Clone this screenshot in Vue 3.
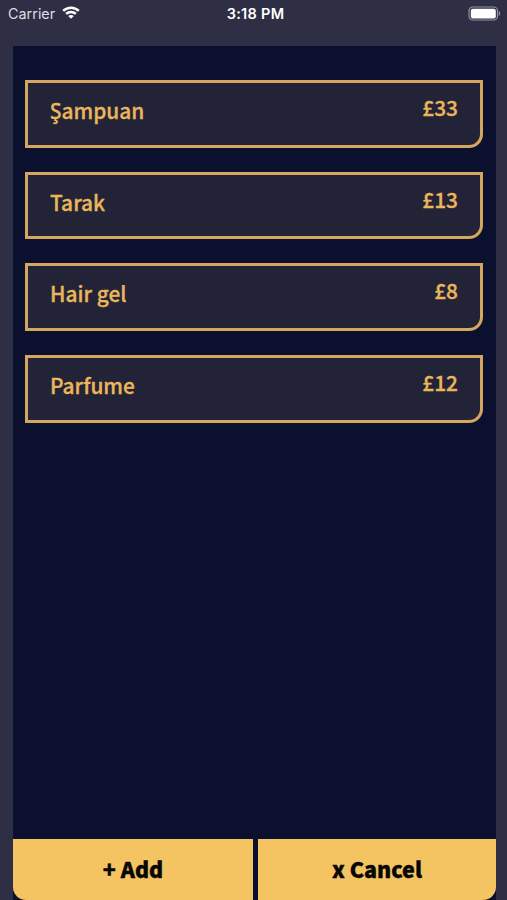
<script setup>
const items = [
  { name: 'Şampuan', price: '£33' },
  { name: 'Tarak', price: '£13' },
  { name: 'Hair gel', price: '£8' },
  { name: 'Parfume', price: '£12' },
]
</script>

<template>
  <div class="screen">
    <header class="status">
      <div class="carrier">
        <span>Carrier</span>
        <svg class="wifi" viewBox="0 0 18 13" width="18" height="13">
          <g fill="none" stroke="#fff" stroke-width="2.5">
            <path d="M1.2 4.9C5.6.6 12.4.6 16.8 4.9" />
            <path d="M4.1 7.9c2.8-2.6 7-2.6 9.8 0" />
          </g>
          <path d="M9 12.8 6.2 10c1.5-1.5 4.1-1.5 5.6 0Z" fill="#fff" />
        </svg>
      </div>
      <span class="time">3:18 PM</span>
      <svg class="battery" viewBox="0 0 33 15" width="33" height="15">
        <rect x="1" y="1" width="28.5" height="13" rx="3.8" fill="none" stroke="#9293a4" stroke-width="1.2" />
        <rect x="2.8" y="2.8" width="25" height="9.6" rx="2" fill="#fff" />
        <path d="M30.8 5.2c1.8.7 1.8 4 0 4.7Z" fill="#9293a4" />
      </svg>
    </header>
    <main class="panel">
      <ul class="list">
        <li v-for="item in items" :key="item.name" class="card">
          <span class="name">{{ item.name }}</span>
          <span class="price">{{ item.price }}</span>
        </li>
      </ul>
      <div class="actions">
        <button class="action add">+ Add</button>
        <button class="action cancel">x Cancel</button>
      </div>
    </main>
  </div>
</template>

<style>
body {
  background: #2e2f45;
}
</style>

<style scoped>
.screen {
  display: flex;
  flex-direction: column;
  box-sizing: border-box;
  width: 507px;
  height: 900px;
  padding: 0 11px 0 13px;
  background: #2e2f45;
  font-family: "Noto Sans CJK SC", "Noto Sans", sans-serif;
}
.status {
  display: grid;
  grid-template-columns: 1fr auto 1fr;
  height: 46px;
  margin: 0 -5px;
  padding-top: 5px;
  box-sizing: border-box;
  color: #fff;
  font-family: Inter, sans-serif;
  font-size: 14.4px;
  line-height: 18px;
}
.carrier {
  display: flex;
  align-items: flex-start;
  gap: 7px;
  color: #dcdce4;
}
.wifi {
  margin-top: 1px;
}
.time {
  padding-left: 2px;
  font-size: 14.5px;
  font-weight: 600;
  letter-spacing: 0.3px;
}
.battery {
  justify-self: end;
  margin-top: 1px;
}
.panel {
  display: flex;
  flex: 1;
  flex-direction: column;
  justify-content: space-between;
  background: #0c102f;
}
.list {
  display: flex;
  flex-direction: column;
  gap: 24.2px;
  margin: 0;
  padding: 34px 13px 0 12px;
  list-style: none;
}
.card {
  display: flex;
  justify-content: space-between;
  box-sizing: border-box;
  height: 67.5px;
  padding: 0 22px;
  border: 3px solid #d5a75e;
  border-radius: 0 0 14px 0;
  background: #222337;
  color: #ebb65a;
  font-size: 20.9px;
  font-weight: 500;
  line-height: 30px;
  -webkit-text-stroke: 0.3px #ebb65a;
}
.name {
  padding-top: 12px;
}
.price {
  padding-top: 9px;
}
.actions {
  display: grid;
  grid-template-columns: 240px 238px;
  justify-content: space-between;
  height: 61px;
}
.action {
  padding: 0 0 1px;
  border: 0;
  background: #f4c463;
  color: #080704;
  font-family: inherit;
  font-size: 21.5px;
  font-weight: 900;
  line-height: 30px;
  -webkit-text-stroke: 0.4px #080704;
}
.add {
  border-bottom-left-radius: 13px;
}
.cancel {
  border-bottom-right-radius: 13px;
}
</style>
